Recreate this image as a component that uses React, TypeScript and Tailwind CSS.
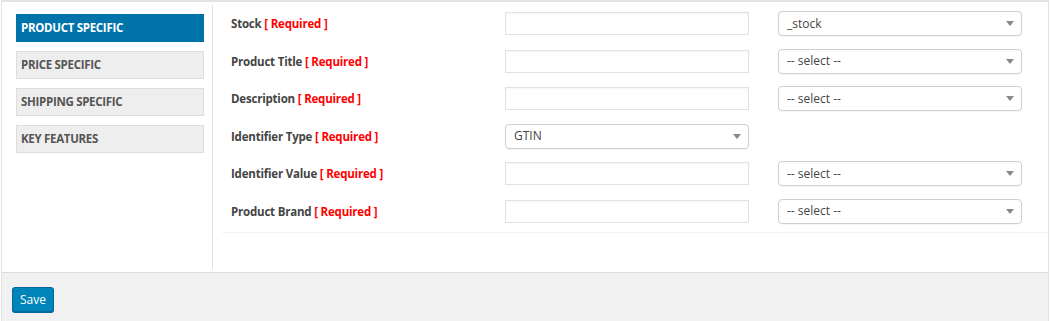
import React from 'react';

const tabs = ['PRODUCT SPECIFIC', 'PRICE SPECIFIC', 'SHIPPING SPECIFIC', 'KEY FEATURES'];

type Row = { label: string; kind: 'pair' | 'single'; value?: string };

const rows: Row[] = [
  { label: 'Stock', kind: 'pair', value: '_stock' },
  { label: 'Product Title', kind: 'pair', value: '-- select --' },
  { label: 'Description', kind: 'pair', value: '-- select --' },
  { label: 'Identifier Type', kind: 'single', value: 'GTIN' },
  { label: 'Identifier Value', kind: 'pair', value: '-- select --' },
  { label: 'Product Brand', kind: 'pair', value: '-- select --' },
];

function Select({ value }: { value: string }) {
  return (
    <div className="w-[244px] h-[25px] border border-[#cfcfcf] rounded-[4px] bg-white flex items-center justify-between pl-[8px] pr-[7px] shadow-[0_1px_1px_rgba(0,0,0,0.04)]">
      <span className="text-[12px] text-[#444]">{value}</span>
      <svg width="8" height="5" viewBox="0 0 8 5">
        <path d="M0 0 L8 0 L4 5 Z" fill="#888" />
      </svg>
    </div>
  );
}

export default function App() {
  return (
    <div className="w-[1050px] h-[321px] bg-white px-[1px] overflow-hidden" style={{ fontFamily: '"Open Sans", "Segoe UI", sans-serif' }}>
      <div className="h-full border-x border-t-2 border-[#e3e3e3] flex flex-col">
        {/* main */}
        <div className="flex h-[270px]">
          <div className="w-[211px] shrink-0 my-[3px] border-r border-[#e1e1e1] pl-[14px] pt-[9px] flex flex-col gap-[9px]">
            {tabs.map((t, i) => (
              <div
                key={t}
                className={
                  i === 0
                    ? 'w-[188px] h-[28px] bg-[#0073aa] border border-[#0073aa] text-white flex items-center pl-[4px] text-[11.5px] font-bold tracking-[-0.3px]'
                    : 'w-[188px] h-[28px] bg-[#eeeeee] border border-[#dedede] text-[#555] flex items-center pl-[4px] text-[11.5px] font-bold tracking-[-0.3px]'
                }
              >
                {t}
              </div>
            ))}
          </div>

          <div className="flex-1 pl-[9px] pt-[3px]">
            <div className="border-b border-[#f3f3f3] pb-[2px]">
              {rows.map((r) => (
                <div key={r.label} className="h-[37.5px] flex items-center">
                  <div className="w-[283px] pl-[9px] text-[11.5px] font-bold tracking-[-0.2px] text-[#444]">
                    {r.label} <span className="text-[#ff0000]">[ Required ]</span>
                  </div>
                  {r.kind === 'pair' ? (
                    <div className="flex items-center gap-[29px]">
                      <div className="w-[244px] h-[23px] border border-[#e2e2e2] bg-white shadow-[inset_0_1px_2px_rgba(0,0,0,0.04)]" />
                      <Select value={r.value!} />
                    </div>
                  ) : (
                    <Select value={r.value!} />
                  )}
                </div>
              ))}
            </div>
          </div>
        </div>

        {/* footer */}
        <div className="flex-1 bg-[#f1f1f1] border-t border-[#dcdcdc] pl-[10px] pt-[14px]">
          <button className="w-[42px] h-[25px] bg-[#0085ba] border border-[#006799] rounded-[3px] text-white text-[12px] flex items-center justify-center shadow-[0_1px_0_#006799]">
            Save
          </button>
        </div>
      </div>
    </div>
  );
}
